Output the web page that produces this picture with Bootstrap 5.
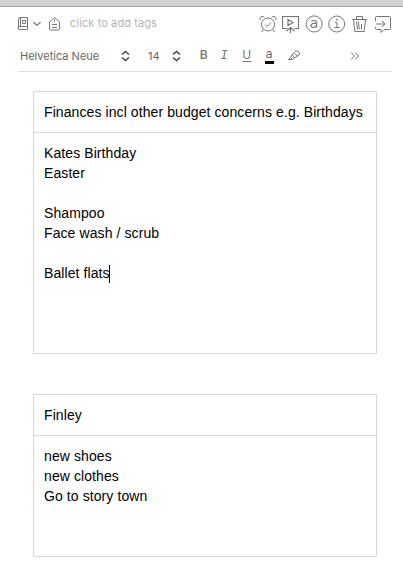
<!DOCTYPE html>
<html lang="en">
<head>
<meta charset="utf-8">
<meta name="viewport" content="width=device-width, initial-scale=1">
<title>Note</title>
<link href="https://cdn.jsdelivr.net/npm/bootstrap@5.3.0/dist/css/bootstrap.min.css" rel="stylesheet">
<style>
body { font-family: "Liberation Sans", Arial, sans-serif; overflow: hidden; }
.window-edge { height: 7px; background: #d3d1d4; border-bottom: 1px solid #a9a8a9; }
.bar { font-family: Inter, "Liberation Sans", sans-serif; font-size: 11px; line-height: 16px; color: #666; }
.bar svg { display: block; flex: none; fill: none; stroke: #757575; stroke-width: 1; }
.bar-top { height: 33px; padding-left: 17px; padding-right: 11px; }
.bar-format { height: 32px; margin: 0 11px 0 18px; padding-left: 2px; border-bottom: 1px solid #e0e0e0; }
.tags { color: #b5b5b0; letter-spacing: .1px; margin-left: 10px; margin-top: -1px; white-space: nowrap; }
.actions { gap: 5px; }
.bar-format svg.stepper { stroke: #444; stroke-width: 1.5; }
.font-name { width: 101px; }
.font-size { width: 24px; margin-left: 18px; }
.glyph { width: 21.5px; text-align: center; font-size: 12px; line-height: 14px; margin-top: -2px; color: #777; }
.glyph-b { margin-left: 12px; }
.serif-i { font-family: "Liberation Mono", monospace; font-size: 13px; padding-right: 2px; margin-top: 0; }
.under-u { text-decoration: underline; text-decoration-thickness: 1px; text-underline-offset: 2px; }
.ink { font-size: 12px; line-height: 12px; width: 9px; border-bottom: 3px solid #000; height: 16px; margin-left: 7px; margin-top: 1px; }
.note { margin: 19px 26px 0 33px; }
.note-box { border: 1px solid #d8d8d8; font-size: 14px; line-height: 20px; letter-spacing: .09px; color: #000; }
.note-title { height: 41px; padding: 10px; border-bottom: 1px solid #d8d8d8; white-space: nowrap; }
.note-body { padding: 10px; }
.tall { height: 220px; }
.short { height: 120px; }
.note-box + .note-box { margin-top: 40px; }
.caret { display: inline-block; width: 1px; height: 18px; margin-left: -1px; background: #000; vertical-align: -5px; }
.bar-format svg.pen { margin-left: 14px; }
.bar-format svg.more { margin-right: 32px; stroke: #666; }
</style>
</head>
<body class="bg-white">
<div class="window-edge"></div>
<header class="bar">
  <div class="bar-top d-flex align-items-center">
    <svg width="12" height="14" viewBox="0 0 12 14"><path d="M2.500 .5h8v9h-8a1.500 1.500 0 0 0 0 3h8v-3M1.500 11.500v-10a1 1 0 0 1 1-1M3.500 .5v9M5.500 3.500h3v3h-3z"/></svg>
    <svg class="ms-1" width="8" height="14" viewBox="0 0 8 14"><path d="M.5 5L4 8.500 7.500 5" stroke-width="1.200"/></svg>
    <svg class="ms-2" width="11" height="14" viewBox="0 0 11 14"><path d="M.5 12V5L4 1.500q1.500-1.500 3 0L10.500 5v7q0 1-1 1h-8q-1 0-1-1zM3 7.500h5M3 10.500h5"/><path d="M5.500 2.500v2"/></svg>
    <span class="tags">click to add tags</span>
    <div class="actions d-flex ms-auto">
      <svg width="18" height="18" viewBox="0 0 18 18"><circle cx="9" cy="9.500" r="6.500"/><path d="M1.500 5Q0 2 3 1.500q1.500-.3 2.500 1M16.500 5Q18 2 15 1.500q-1.500-.3-2.500 1M4.500 14.500l-2 2.500M13.500 14.500l2 2.500M6 9.500l2 2 4-4"/></svg>
      <svg width="18" height="18" viewBox="0 0 18 18"><path d="M5.500 13.500H.5v-12h16v12h-4M6 4.500v6l5-3zM8.500 12v6M4.500 16l4-3.500 4 3.500" stroke-width="1.200"/></svg>
      <svg width="18" height="18" viewBox="0 0 18 18"><path d="M12.500 1.700A8 8 0 1 0 16.200 5.200M12.500 1.700Q15 3 16.200 5.200"/><path d="M6.500 6.500Q7 5.500 9 5.500q2.500 0 2.500 2v5M11.500 8.200C8 8.200 6 8.700 6 10.700c0 2.500 4 2.300 5.500 0" stroke-width="1.200"/></svg>
      <svg width="18" height="18" viewBox="0 0 18 18"><circle cx="8.700" cy="9" r="8"/><path d="M7 7.500h2v5M6.500 12.500h5" /><path d="M8.200 4.700h1.500" stroke-width="1.500"/></svg>
      <svg width="18" height="18" viewBox="0 0 18 18"><path d="M1 4.500h15M5.500 4.500v-3h6v3M2.500 4.500l1.300 12h9.400l1.300-12M5.500 6.500l1 8M7.500 6.500l.7 8M10.500 9v5.500"/></svg>
      <svg width="18" height="18" viewBox="0 0 18 18"><path d="M1.500 6V2.500q0-1 1-1h13q1 0 1 1v11q0 1-1 1H10l-3 3v-3H2.500q-1 0-1-1V12M2 9h8.500M8 6l3 3-3 3"/></svg>
    </div>
  </div>
  <div class="bar-format d-flex align-items-center">
    <span class="font-name text-nowrap">Helvetica Neue</span>
    <svg class="stepper" width="9" height="12" viewBox="0 0 9 12"><path d="M1 4.500l3.500-3 3.500 3M1 7.500l3.500 3 3.500-3"/></svg>
    <span class="font-size">14</span>
    <svg class="stepper" width="9" height="12" viewBox="0 0 9 12"><path d="M1 4.500l3.500-3 3.500 3M1 7.500l3.500 3 3.500-3"/></svg>
    <span class="glyph glyph-b fw-semibold">B</span>
    <span class="glyph serif-i fst-italic">I</span>
    <span class="glyph under-u">U</span>
    <span class="ink text-center">a</span>
    <svg class="pen" width="12" height="12" viewBox="0 0 12 12"><path d="M4 5l3-3.500q2-1.300 3.500 0t.5 3.500L6.500 8zM4 5L2.500 7.500l2 2 2-1.500M2.500 7.500L.5 9.500h4M6.500 3.500l3 2.500"/></svg>
    <svg class="more ms-auto" width="10" height="10" viewBox="0 0 10 10"><path d="M1 1.500L4.500 5 1 8.500M5 1.500L8.500 5 5 8.500"/></svg>
  </div>
</header>
<main class="note">
  <section class="note-box">
    <div class="note-title">Finances incl other budget concerns e.g. Birthdays</div>
    <div class="note-body tall">Kates Birthday<br>Easter<br><br>Shampoo<br>Face wash / scrub<br><br>Ballet flats<span class="caret"></span></div>
  </section>
  <section class="note-box">
    <div class="note-title">Finley</div>
    <div class="note-body short">new shoes<br>new clothes<br>Go to story town</div>
  </section>
</main>
<script src="https://cdn.jsdelivr.net/npm/bootstrap@5.3.0/dist/js/bootstrap.bundle.min.js"></script>
</body>
</html>
